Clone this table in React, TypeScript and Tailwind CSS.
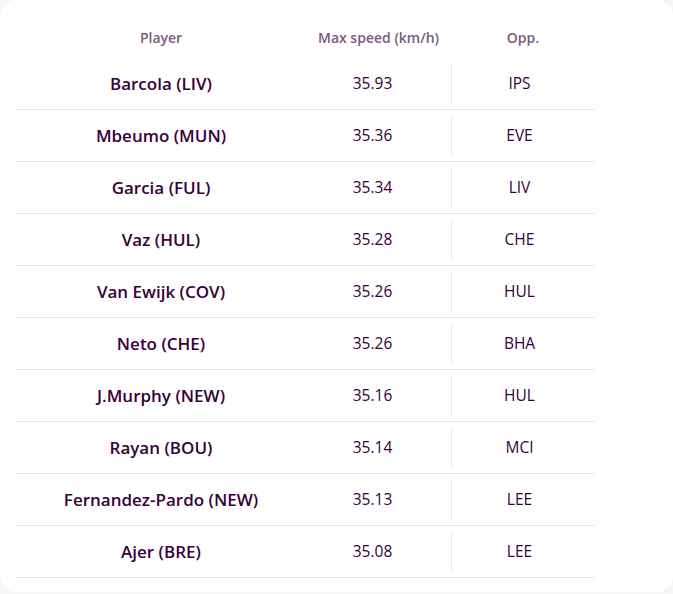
const rows = [
  { player: "Barcola (LIV)", speed: "35.93", opp: "IPS" },
  { player: "Mbeumo (MUN)", speed: "35.36", opp: "EVE" },
  { player: "Garcia (FUL)", speed: "35.34", opp: "LIV" },
  { player: "Vaz (HUL)", speed: "35.28", opp: "CHE" },
  { player: "Van Ewijk (COV)", speed: "35.26", opp: "HUL" },
  { player: "Neto (CHE)", speed: "35.26", opp: "BHA" },
  { player: "J.Murphy (NEW)", speed: "35.16", opp: "HUL" },
  { player: "Rayan (BOU)", speed: "35.14", opp: "MCI" },
  { player: "Fernandez-Pardo (NEW)", speed: "35.13", opp: "LEE" },
  { player: "Ajer (BRE)", speed: "35.08", opp: "LEE" },
];

export default function App() {
  return (
    <div className="min-h-screen bg-[#f5f5f5] font-['Open_Sans',sans-serif] text-[#37003c]">
      <div className="h-[592px] w-[673px] rounded-2xl bg-white px-4 pt-4">
        <div className="w-[579px]">
          <div className="flex h-[42px] items-center text-[14px] font-semibold text-[#7a5a7e]">
            <div className="w-[290px] text-center">Player</div>
            <div className="w-[145px] text-center">Max speed (km/h)</div>
            <div className="flex-1 text-center">Opp.</div>
          </div>
          {rows.map((r) => (
            <div key={r.player} className="flex h-[52px] items-center border-b border-[#e6e6e6]">
              <div className="w-[290px] text-center text-[17px] font-semibold">{r.player}</div>
              <div className="w-[145px] pr-3 text-center text-[15.5px]">{r.speed}</div>
              <div className="flex h-[40px] flex-1 items-center justify-center border-l border-[#e8e8e8] pr-2 text-[15.5px]">
                {r.opp}
              </div>
            </div>
          ))}
        </div>
      </div>
    </div>
  );
}
